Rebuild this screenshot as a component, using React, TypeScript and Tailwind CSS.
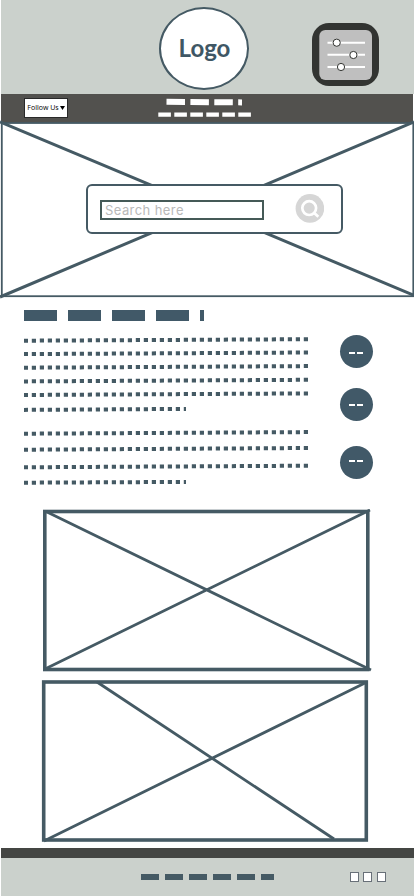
type Line = { x2: number; y1: number; y2: number };

const INK = "#455a64";

const firstParagraph: Line[] = [
  { x2: 308, y1: 11, y2: 9.5 },
  { x2: 308, y1: 24.4, y2: 22.8 },
  { x2: 308, y1: 38, y2: 36.4 },
  { x2: 308, y1: 51.7, y2: 50.1 },
  { x2: 308, y1: 65.3, y2: 63.7 },
  { x2: 186, y1: 80.2, y2: 79.2 },
];

const secondParagraph: Line[] = [
  { x2: 308, y1: 14, y2: 12.4 },
  { x2: 308, y1: 30, y2: 28.3 },
  { x2: 308, y1: 47.6, y2: 46 },
  { x2: 186, y1: 63, y2: 62.2 },
];

function Paragraph({ lines, className }: { lines: Line[]; className: string }) {
  return (
    <svg className={className} fill="none" stroke={INK} strokeWidth="4" strokeDasharray="4.2 3.8">
      {lines.map((l) => (
        <line key={l.y1} x1="-0.2" y1={l.y1 - 0.3} x2={l.x2 - 24} y2={l.y2 - 0.3} />
      ))}
    </svg>
  );
}

function Bars({ widths, className, bar }: { widths: number[]; className: string; bar: string }) {
  return (
    <div className={`flex ${className}`}>
      {widths.map((w, i) => (
        <span key={i} className={bar} style={{ width: w }} />
      ))}
    </div>
  );
}

function Bubble({ className, dash }: { className: string; dash: string }) {
  return (
    <div className={`flex size-[33.4px] justify-center gap-[2px] rounded-full bg-[#415968] ${className}`}>
      <span className={`h-[2px] w-[6px] bg-white ${dash}`} />
      <span className={`h-[2px] w-[6px] bg-white ${dash}`} />
    </div>
  );
}

function SettingsIcon() {
  return (
    <svg className="mt-[23px] ml-[63px] h-[63px] w-[67px]" viewBox="0 0 67 63">
      <rect width="67" height="63" rx="17" fill="#323431" />
      <rect x="7.3" y="7" width="52.7" height="50" rx="6" fill="#bfbfbf" />
      <path d="M15.5 19.7H53M15.5 31.8H53M15.5 44H53" stroke="#fff" strokeWidth="2" />
      <g fill="#fff" stroke="#333532" strokeWidth="1">
        <circle cx="24.7" cy="19.7" r="3.6" />
        <circle cx="41.4" cy="32" r="3.6" />
        <circle cx="29" cy="44" r="3.6" />
      </g>
    </svg>
  );
}

export default function App() {
  return (
    <div className="flex h-[896px] w-[414px] flex-col overflow-hidden bg-white">
      <header className="ml-px flex h-[94px] shrink-0 bg-[#cbd1cc]">
        <div className="mt-[7px] ml-[158px] flex h-[83px] w-[90px] items-center justify-center rounded-[50%] border-2 border-[#455a64] bg-white pb-px pl-px">
          <span className="font-['Lato',sans-serif] text-[24px] leading-none font-bold text-[#3f5765]">Logo</span>
        </div>
        <SettingsIcon />
      </header>

      <nav className="mr-px ml-px flex h-[29px] shrink-0 bg-[#52514e]">
        <button className="mt-[4px] ml-[23px] flex h-[20px] w-[44px] items-center justify-center gap-[1px] border border-[#292929] bg-white pb-px font-['Open_Sans',sans-serif] text-[7px] leading-none whitespace-nowrap text-black">
          Follow Us
          <svg className="mt-px h-[4px] w-[5px]" viewBox="0 0 5 4">
            <path d="M0 0H5L2.5 4Z" />
          </svg>
        </button>
        <svg className="mt-[4px] ml-[89px] h-[20px] w-[95px]" viewBox="157 98 95 20" fill="none" stroke="#fff">
          <path d="M166.5 101.8L242 102.4" strokeWidth="6" strokeDasharray="18.5 5.4" />
          <path d="M158.3 114.6H251" strokeWidth="4.2" strokeDasharray="12.6 3.4" />
        </svg>
      </nav>

      <section className="relative flex h-[175px] shrink-0">
        <svg className="absolute -top-[3px] left-0 h-[180px] w-[414px]" viewBox="0 -3 414 180" fill="none" stroke={INK}>
          <path d="M0 -1.2L414 172.3M0 174L414 -1.2" strokeWidth="3" />
          <rect x="1.8" y="0" width="411.5" height="173.2" strokeWidth="1.8" />
        </svg>
        <div className="relative mt-[61px] ml-[86px] flex h-[50px] w-[257px] rounded-[6px] border-2 border-[#455a64] bg-white">
          <div className="mt-[14px] ml-[12px] flex h-[20px] w-[164px] items-center border-2 border-[#455a57] pl-[3px] font-['Inter',sans-serif] text-[13px] leading-none tracking-[0.42px] whitespace-nowrap text-[#b9b9b9]">
            Search here
          </div>
          <svg className="mt-[8px] ml-[31px] size-[29px]" viewBox="0 0 29 29" fill="none">
            <circle cx="14.9" cy="14.4" r="14.3" fill="#d6d6d6" />
            <circle cx="14.2" cy="14.1" r="6.9" stroke="#fff" strokeWidth="2.7" />
            <path d="M19 18.8L23.3 22.8" stroke="#fff" strokeWidth="2.8" />
          </svg>
        </div>
      </section>

      <main className="flex h-[550px] shrink-0 flex-col">
        <Bars widths={[33, 33, 33, 33, 4.5]} className="mt-[12px] ml-[23.5px] gap-[11px]" bar="h-[11px] shrink-0 bg-[#415968]" />
        <div className="flex h-[188px]">
          <div className="ml-[24px] flex w-[285px] flex-col pt-[9px]">
            <Paragraph lines={firstParagraph} className="h-[90px] w-[285px]" />
            <Paragraph lines={secondParagraph} className="h-[70px] w-[285px]" />
          </div>
          <div className="ml-[30.8px] flex flex-col">
            <Bubble className="mt-[13.6px]" dash="mt-[17.4px]" />
            <Bubble className="mt-[19.6px]" dash="mt-[16.4px]" />
            <Bubble className="mt-[25px]" dash="mt-[13.8px]" />
          </div>
        </div>
        <svg className="ml-[42px] h-[164px] w-[331px] shrink-0" viewBox="42 509 331 164" fill="none" stroke={INK}>
          <rect x="44.8" y="511.5" width="323" height="158" strokeWidth="3.6" />
          <path d="M46 511.5L371 670M45 669L370 510" strokeWidth="2.8" />
        </svg>
        <svg className="mt-[6px] ml-[41px] h-[165px] w-[330px] shrink-0" viewBox="41 679 330 165" fill="none" stroke={INK}>
          <rect x="43.7" y="682" width="322.6" height="158" strokeWidth="3.6" />
          <path d="M97 682L334 839M44 841L367 682" strokeWidth="2.8" />
        </svg>
      </main>

      <footer className="ml-px flex h-[48px] shrink-0 border-t-[10px] border-[#444643] bg-[#cbd1cc]">
        <Bars widths={[18, 18, 18, 18, 18, 12.7]} className="mt-[15.7px] ml-[140px] gap-[6px]" bar="h-[6px] shrink-0 bg-[#455a64]" />
        <div className="mt-[14px] ml-[76.3px] flex gap-[4.5px]">
          <span className="h-[10px] w-[9px] border border-[#687078] bg-white" />
          <span className="h-[10px] w-[9px] border border-[#687078] bg-white" />
          <span className="h-[10px] w-[9px] border border-[#687078] bg-white" />
        </div>
      </footer>
    </div>
  );
}
